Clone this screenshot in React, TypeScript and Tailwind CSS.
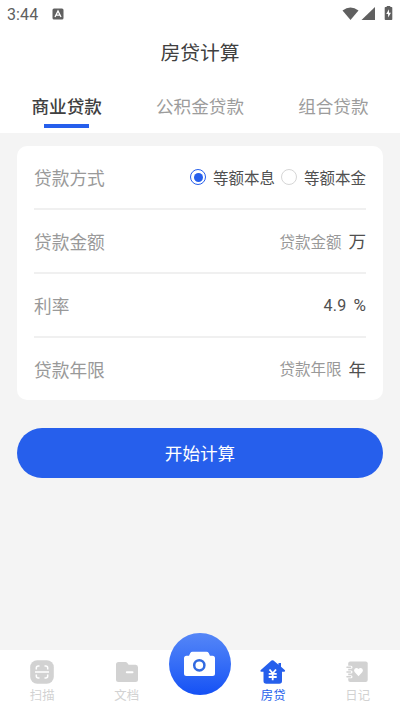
import React, { useState } from 'react'
import clsx from 'clsx'

export default function App() {
  const [tab, setTab] = useState(0)
  const [method, setMethod] = useState(0)

  return (
    <div className="flex h-[712px] w-[400px] flex-col bg-[#f4f4f4] font-['Noto_Sans_CJK_SC',sans-serif] text-[#505050]">
      <header className="bg-white">
        <StatusBar />
        <h1 className="flex h-12 items-center justify-center text-[19.8px] text-[#404040]">房贷计算</h1>
        <nav className="flex h-[57px] pt-[16px]">
          {TABS.map((name, index) => (
            <button
              key={name}
              onClick={() => setTab(index)}
              className={clsx(
                'flex flex-1 flex-col items-center text-[17.6px] leading-[27px]',
                tab === index ? 'font-medium text-[#404040]' : 'text-[#9c9c9c]'
              )}
            >
              {name}
              {tab === index && <span className="mt-[5px] h-1 w-[45px] bg-[#265fec]"></span>}
            </button>
          ))}
        </nav>
      </header>

      <main className="flex-1 px-[17px] pt-[13px]">
        <section className="h-[254px] rounded-[10px] bg-white px-[17px]">
          <Row label="贷款方式">
            {METHODS.map((name, index) => (
              <button key={name} onClick={() => setMethod(index)} className="ml-[6.5px] flex items-center">
                <Radio checked={method === index} />
                <span className="mt-[2px] ml-[6.5px] text-[15.5px]">{name}</span>
              </button>
            ))}
          </Row>
          <Row label="贷款金额">
            <span className="mt-[1px] text-[15.5px] text-[#999]">贷款金额</span>
            <span className="ml-[7px] text-[17.6px]">万</span>
          </Row>
          <Row label="利率">
            <span className="mt-[2px] font-['Roboto'] text-[16px] tracking-[0.3px]">4.9</span>
            <span className="mt-[2px] ml-[7px] font-['Roboto'] text-[17px]">%</span>
          </Row>
          <Row label="贷款年限" last>
            <span className="text-[15.5px] text-[#999]">贷款年限</span>
            <span className="ml-[7px] text-[17.6px]">年</span>
          </Row>
        </section>

        <button className="mt-[28px] flex h-[50px] w-full items-center justify-center rounded-full bg-[#265fec] text-[17.6px] text-white">
          开始计算
        </button>
      </main>

      <footer className="flex h-[62px] bg-white">
        <NavItem label="扫描" icon={<ScanIcon />} />
        <NavItem label="文档" icon={<FolderIcon />} />
        <button className="-mt-[17px] flex size-[62px] items-center justify-center rounded-full bg-linear-to-b from-[#5586f7] to-[#1450f5]">
          <CameraIcon />
        </button>
        <NavItem label="房贷" icon={<HouseIcon />} active />
        <NavItem label="日记" icon={<DiaryIcon />} />
      </footer>
    </div>
  )
}

function StatusBar() {
  return (
    <div className="flex h-7 items-center px-[7px] text-[#606060]">
      <span className="mt-[1px] font-['Roboto'] text-[16px] leading-none tracking-[0.1px]">3:44</span>
      <svg className="ml-[14px]" width="12" height="12" viewBox="0 0 12 12">
        <rect x="0.5" y="0.5" width="11" height="11" rx="1.5" fill="currentColor" />
        <path d="M3 9 6 3l3 6M4.2 7.2h3.6" fill="none" stroke="#fff" strokeWidth="1.3" />
      </svg>
      <svg className="ml-auto" width="51" height="16" viewBox="0 0 51 16" fill="currentColor">
        <path d="M0.5 4.5Q8.5-1.5 16.5 4.5L8.5 14Z" />
        <path d="M33 1v13H19.5Z" />
        <path d="M43.5 1h1.2V0h3.6v1h1.2q.8 0 .8.8v11.4q0 .8-.8.8h-6q-.8 0-.8-.8V1.8q0-.8.8-.8Z" />
        <path d="M47 3.2 44.2 8h1.9v3.6L49 6.8h-2Z" fill="#fff" />
      </svg>
    </div>
  )
}

function Row({ label, last = false, children }: { label: string; last?: boolean; children: React.ReactNode }) {
  return (
    <div className={clsx('flex items-center', last ? 'h-[62px]' : 'h-[64px] border-b-2 border-[#f0f0f0]')}>
      <span className="mr-auto text-[17.7px] text-[#999]">{label}</span>
      {children}
    </div>
  )
}

function Radio({ checked }: { checked: boolean }) {
  return (
    <span
      className={clsx(
        'flex size-4 items-center justify-center rounded-full border',
        checked ? 'border-[#265fec]' : 'border-[#d6d6d6]'
      )}
    >
      {checked && <span className="size-[9px] rounded-full bg-[#265fec]"></span>}
    </span>
  )
}

function NavItem({ label, icon, active = false }: { label: string; icon: React.ReactNode; active?: boolean }) {
  return (
    <button
      className={clsx(
        'flex flex-1 flex-col items-center pt-[9px] text-[12.4px] leading-[18px]',
        active ? 'text-[#265fec]' : 'text-[#d2d2d2]'
      )}
    >
      {icon}
      <span className="mt-[1px]">{label}</span>
    </button>
  )
}

function ScanIcon() {
  return (
    <svg width="26" height="26" viewBox="0 0 26 26" fill="none">
      <rect x="1.2" y="1.2" width="23.6" height="23.6" rx="7" fill="currentColor" />
      <path
        d="M10.5 7H9.3Q7.3 7 7.3 9v1.5M15.5 7h1.2q2 0 2 2v1.5M7.3 15.5V17q0 2 2 2h1.2M18.7 15.5V17q0 2-2 2h-1.2M6 13h14"
        stroke="#fff"
        strokeWidth="1.5"
      />
    </svg>
  )
}

function FolderIcon() {
  return (
    <svg width="26" height="26" viewBox="0 0 26 26" fill="none">
      <path
        d="M4.5 3h7q1 0 1.6.8l1.5 2h7Q24 5.8 24 8.3V20.5Q24 23 21.5 23H4.5Q2 23 2 20.5V5.5Q2 3 4.5 3Z"
        fill="currentColor"
      />
      <path d="M12.8 13.3H18.5" stroke="#fff" strokeWidth="2" strokeLinecap="round" />
    </svg>
  )
}

function CameraIcon() {
  return (
    <svg width="32" height="26" viewBox="0 0 32 26">
      <path
        d="M8.5 0.8H22.5Q24 0.8 24.7 2L26 4.7H28.5Q31 4.7 31 7.2V22.5Q31 25 28.5 25H2.5Q0 25 0 22.5V7.2Q0 4.7 2.5 4.7H5L6.3 2Q7 0.8 8.5 0.8Z"
        fill="#fff"
      />
      <circle cx="15.3" cy="14.3" r="5.1" fill="none" stroke="#316ae0" strokeWidth="2.5" />
    </svg>
  )
}

function HouseIcon() {
  return (
    <svg width="26" height="26" viewBox="0 0 26 26">
      <path
        d="M11.5 1.6Q12.5.8 13.5 1.6L18.5 5.7V4H21V7.8L24.7 11Q25.8 12.8 24 12.8H22V22Q22 24.7 19.3 24.7H6.2Q3.5 24.7 3.5 22V12.8H1.5Q-.4 12.8.8 11Z"
        fill="currentColor"
      />
      <path d="M9.5 10.5 12.7 14.3 16 10.5M12.7 14.3V21.3M8.7 14.8h8M8.700 18h8" fill="none" stroke="#fff" strokeWidth="1.8" />
    </svg>
  )
}

function DiaryIcon() {
  return (
    <svg width="26" height="26" viewBox="0 0 26 26">
      <path
        d="M5.2 2.5H20.7Q22.7 2.5 22.7 4.5V21Q22.7 23 20.7 23H5.2Q3.2 23 3.2 21V4.5Q3.2 2.5 5.2 2.5Z"
        fill="currentColor"
      />
      <path d="M0 8.3H6M0 13H6M0 17.7H6" stroke="#fff" strokeWidth="3" strokeLinecap="round" />
      <path d="M2 8.3H5.5M2 13H5.5M2 17.7H5.5" stroke="currentColor" strokeWidth="1.6" strokeLinecap="round" />
      <path
        d="M13.5 17.2 9.6 13Q8.3 11 9.9 9.500 11.9 8.300 13.500 10 15.200 8.300 17.100 9.500 18.700 11 17.400 13Z"
        fill="#fff"
      />
    </svg>
  )
}

const TABS = ['商业贷款', '公积金贷款', '组合贷款']

const METHODS = ['等额本息', '等额本金']
